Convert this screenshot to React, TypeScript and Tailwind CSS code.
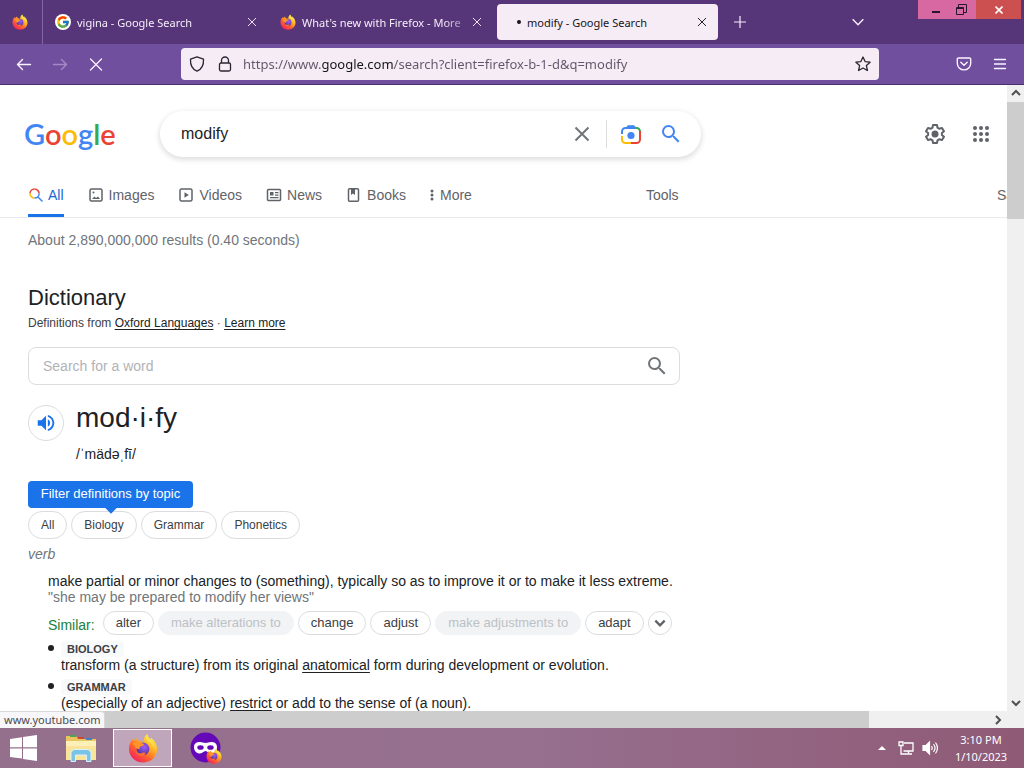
import type { ReactNode } from 'react';
import clsx from 'clsx';
import { FcGoogle } from 'react-icons/fc';

interface IconProps {
    className?: string;
}

function FirefoxIcon({ className, id }: IconProps & { id: string }) {
    return (
        <svg viewBox="0 0 32 32" className={className} aria-hidden="true">
            <defs>
                <linearGradient id={`${id}-body`} x1="0.85" y1="0.1" x2="0.2" y2="0.95">
                    <stop offset="0" stopColor="#fff14f" />
                    <stop offset="0.35" stopColor="#ffae24" />
                    <stop offset="0.65" stopColor="#ff6030" />
                    <stop offset="1" stopColor="#f02060" />
                </linearGradient>
                <radialGradient id={`${id}-core`} cx="0.6" cy="0.35" r="0.7">
                    <stop offset="0" stopColor="#a35cf5" />
                    <stop offset="1" stopColor="#46329c" />
                </radialGradient>
            </defs>
            <path
                d="M20.5 1c.2 3 2 4.500 4 6.400 0-1.200-.1-1.900-.4-2.900 3.600 2.600 6.900 7.300 6.900 13C31 25.300 24.300 31.500 16 31.500S1 25 1 17c0-4.500 1.500-8 4-11 .2 1 .4 1.700 1 2.400C7.300 7 8.600 5.900 10.400 5c-.2 1.500.1 2.600.9 3.500 2 .1 3.900.4 5.300 1.200C16.200 6.600 17.500 3 20.500 1z"
                fill={`url(#${id}-body)`}
            />
            <circle cx="16" cy="17" r="6.800" fill={`url(#${id}-core)`} />
            <path d="M4.500 12c3-2.600 6-3.300 9.500-1.600 1 .5 2 1.200 3.200 1.200-.4 1.900-2.500 2.100-3.700 2.700-1.500.8-1.300 2-.8 2.800-3.700.5-5.400-1.500-5.600-4.200z" fill="#ff9427" />
            <path d="M8 18c1 3 4 4.500 7 3.300 2-.8 3.200-.6 4 .4-2 4.300-9.500 4-11-3.700z" fill="#ff6c31" />
            <path d="M20.500 1c.2 4.500 8 7 7.300 16.500C27.300 12.500 25 11 22 9.500c-2.500-1.600-3.600-5-1.500-8.500z" fill="#ffe14a" />
        </svg>
    );
}

function CloseIcon({ className }: IconProps) {
    return (
        <svg viewBox="0 0 16 16" className={className} fill="none" stroke="currentColor" strokeWidth="1.5" strokeLinecap="round" aria-hidden="true">
            <path d="M2 2l12 12M14 2L2 14" />
        </svg>
    );
}

function ChevronIcon({ className, strokeWidth = 2 }: IconProps & { strokeWidth?: number }) {
    return (
        <svg viewBox="0 0 12 12" className={className} fill="none" stroke="currentColor" strokeWidth={strokeWidth} aria-hidden="true">
            <path d="M2 4l4 4 4-4" />
        </svg>
    );
}

function SearchIcon({ className }: IconProps) {
    return (
        <svg viewBox="0 0 24 24" className={className} fill="currentColor" aria-hidden="true">
            <path d="M15.500 14h-.79l-.28-.27A6.470 6.470 0 0 0 16 9.500 6.500 6.500 0 1 0 9.500 16c1.610 0 3.090-.59 4.230-1.570l.27.28v.79l5 4.990L20.490 19l-4.990-5zm-6 0C7.010 14 5 11.990 5 9.500S7.010 5 9.500 5 14 7.010 14 9.500 11.990 14 9.500 14z" />
        </svg>
    );
}

interface BrowserTabProps {
    title: string;
    icon: ReactNode;
    active?: boolean;
    className: string;
}

function BrowserTab({ title, icon, active, className }: BrowserTabProps) {
    return (
        <div className={clsx('flex h-9 items-center rounded pr-[7px] text-[11px]', className, active ? 'bg-[#f5ecf5] text-[#15141a]' : 'text-[#f6eefa]')}>
            {icon}
            <span
                className={clsx(
                    'flex-1 overflow-hidden pt-0.5 whitespace-nowrap',
                    !active && 'mask-r-from-85% mask-r-to-105%',
                )}
            >
                {title}
            </span>
            <button type="button" aria-label={`Close ${title}`} className="p-1">
                <CloseIcon className="size-2.5" />
            </button>
        </div>
    );
}

function TabStrip() {
    return (
        <div className="flex h-11 shrink-0 items-center bg-[#563579] text-[#f6eefa]">
            <button type="button" aria-label="Firefox View" className="flex h-full w-[43px] shrink-0 items-center justify-center border-r border-[#8564a8] pr-0.5">
                <FirefoxIcon id="view" className="size-4" />
            </button>
            <BrowserTab
                title="vigina - Google Search"
                className="w-[225px] pl-3"
                icon={
                    <span className="mr-1.5 flex size-4 shrink-0 items-center justify-center rounded-full bg-white">
                        <FcGoogle className="size-3.5" />
                    </span>
                }
            />
            <BrowserTab
                title="What's new with Firefox - More"
                className="w-[225px] pl-3"
                icon={<FirefoxIcon id="news" className="mr-1.5 size-4 shrink-0" />}
            />
            <BrowserTab
                active
                title="modify - Google Search"
                className="ml-1 w-[221px] pl-5"
                icon={<span className="mr-1.5 size-1 shrink-0 rounded-full bg-[#15141a]" />}
            />
            <button type="button" aria-label="New tab" className="ml-4">
                <svg viewBox="0 0 12 12" className="size-3" fill="none" stroke="currentColor" strokeWidth="1.2" aria-hidden="true">
                    <path d="M6 0v12M0 6h12" />
                </svg>
            </button>
            <button type="button" aria-label="List all tabs" className="mr-[52px] ml-auto">
                <ChevronIcon className="size-4" strokeWidth={1.1} />
            </button>
            <div className="mr-[3px] flex h-[19px] self-start text-[#2a1530]">
                <button type="button" aria-label="Minimize" className="flex w-9 items-center justify-center bg-[#d868a2] pt-1">
                    <span className="h-0.5 w-2 bg-current" />
                </button>
                <button type="button" aria-label="Restore" className="flex w-[22px] items-center bg-[#d868a2] pl-0.5">
                    <svg viewBox="0 0 11 11" className="size-[11px]" fill="none" stroke="currentColor" aria-hidden="true">
                        <path d="M.5 3.500h7v7h-7zM2.500 3V.5h8v8H8M.5 4.500h7" />
                    </svg>
                </button>
                <button type="button" aria-label="Close" className="flex w-[45px] items-center justify-center bg-[#cd5050] text-white">
                    <svg viewBox="0 0 8 8" className="size-2" stroke="currentColor" strokeWidth="1.6" aria-hidden="true">
                        <path d="M.5.5l7 7M7.500.5l-7 7" />
                    </svg>
                </button>
            </div>
        </div>
    );
}

function Toolbar() {
    return (
        <div className="flex h-[41px] shrink-0 items-center border-b border-[#4c2f70] bg-[#704f9e] pr-4 pl-4 text-[#fbf3ff]">
            <button type="button" aria-label="Go back">
                <svg viewBox="0 0 16 16" className="size-4" fill="none" stroke="currentColor" strokeWidth="1.4" strokeLinecap="round" strokeLinejoin="round" aria-hidden="true">
                    <path d="M14.500 8.500H1.500M6.500 3.500l-5 5 5 5" />
                </svg>
            </button>
            <button type="button" aria-label="Go forward" className="ml-5 text-[#a489c6]" disabled>
                <svg viewBox="0 0 16 16" className="size-4" fill="none" stroke="currentColor" strokeWidth="1.4" strokeLinecap="round" strokeLinejoin="round" aria-hidden="true">
                    <path d="M1.500 8.500h13M9.500 3.500l5 5-5 5" />
                </svg>
            </button>
            <button type="button" aria-label="Stop loading" className="ml-5">
                <svg viewBox="0 0 16 16" className="size-4" stroke="currentColor" strokeWidth="1.3" strokeLinecap="round" aria-hidden="true">
                    <path d="M2.500 3l11 11M13.500 3l-11 11" />
                </svg>
            </button>
            <div className="mr-[77px] ml-[77px] flex h-8 flex-1 items-center rounded bg-[#f5ecf5] px-2 text-[#2b2633]">
                <svg viewBox="0 0 16 16" className="size-4 shrink-0" fill="none" stroke="currentColor" strokeWidth="1.3" strokeLinejoin="round" aria-hidden="true">
                    <path d="M8 .8l6.500 2.400c.3 5-1.500 9.800-6.500 12C3 13 1.200 8.200 1.500 3.200z" />
                </svg>
                <svg viewBox="0 0 16 16" className="ml-3 size-4 shrink-0" fill="none" stroke="currentColor" strokeWidth="1.3" aria-hidden="true">
                    <rect x="2.500" y="7" width="11" height="8" rx="1.500" />
                    <path d="M4.500 7V4.500a3.500 3.500 0 0 1 7 0V7" />
                </svg>
                <input
                    type="text"
                    aria-label="Address"
                    defaultValue="https://www.google.com/search?client=firefox-b-1-d&q=modify"
                    className="ml-2.5 min-w-0 flex-1 bg-[linear-gradient(90deg,#5f5769_78px,#15141a_78px,#15141a_150px,#5f5769_150px)] bg-clip-text pt-0.5 text-[13px] text-transparent outline-none"
                />
                <button type="button" aria-label="Bookmark this page">
                    <svg viewBox="0 0 16 16" className="size-4" fill="none" stroke="currentColor" strokeWidth="1.3" strokeLinejoin="round" aria-hidden="true">
                        <path d="M8 1l2.100 4.600 5 .6-3.700 3.400 1 4.900L8 12l-4.400 2.500 1-4.900L.9 6.200l5-.6z" />
                    </svg>
                </button>
            </div>
            <button type="button" aria-label="Save to Pocket">
                <svg viewBox="0 0 16 16" className="size-4" fill="none" stroke="currentColor" strokeWidth="1.4" strokeLinecap="round" strokeLinejoin="round" aria-hidden="true">
                    <path d="M2.500 2h11c.7 0 1.200.5 1.200 1.200v4a6.700 6.700 0 0 1-13.400 0v-4C1.300 2.500 1.800 2 2.500 2zM4.800 6.200L8 9.300l3.200-3.100" />
                </svg>
            </button>
            <button type="button" aria-label="Open application menu" className="ml-5">
                <svg viewBox="0 0 16 16" className="size-4" stroke="currentColor" strokeWidth="1.3" strokeLinecap="round" aria-hidden="true">
                    <path d="M2.500 3.500h11M2.500 8h11M2.500 12.500h11" />
                </svg>
            </button>
        </div>
    );
}

function LensIcon() {
    return (
        <svg viewBox="0 0 24 24" className="size-6" fill="none" strokeWidth="2" aria-hidden="true">
            <path d="M3 12V9.500A3.500 3.500 0 0 1 6.500 6H8" stroke="#4285f4" />
            <path d="M7 6l1.800-2.200h6.400L17 6z" fill="#4285f4" stroke="#4285f4" strokeWidth="1" />
            <path d="M7 6h10" stroke="#4285f4" />
            <path d="M17 6h.5A3.500 3.500 0 0 1 21 9.500" stroke="#34a853" />
            <path d="M21 9v8.500a3.500 3.500 0 0 1-3.500 3.500H12" stroke="#ea4335" />
            <path d="M3 14v3.500A3.500 3.500 0 0 0 6.500 21H12" stroke="#fbbc04" />
            <circle cx="12" cy="13.500" r="3.600" fill="#4285f4" />
        </svg>
    );
}

function SearchHeader() {
    return (
        <header className="flex items-center pt-[26px] pr-3.5">
            <a href="#home" aria-label="Google" className="ml-6 w-[136px] shrink-0 font-['Lato'] text-[29px] leading-9 font-semibold">
                <span className="text-[#4285f4]">G</span>
                <span className="text-[#ea4335]">o</span>
                <span className="text-[#fbbc05]">o</span>
                <span className="text-[#4285f4]">g</span>
                <span className="text-[#34a853]">l</span>
                <span className="text-[#ea4335]">e</span>
            </a>
            <form className="flex h-[46px] w-[541px] items-center rounded-full bg-white pr-[18px] pl-[21px] shadow-[0_2px_5px_1px_rgba(64,60,67,0.16)]">
                <input type="text" aria-label="Search" defaultValue="modify" className="min-w-0 flex-1 text-base text-[#202124] outline-none" />
                <button type="button" aria-label="Clear">
                    <svg viewBox="0 0 16 16" className="size-4" stroke="#70757a" strokeWidth="2" aria-hidden="true">
                        <path d="M1.500 1.500l13 13M14.500 1.500l-13 13" />
                    </svg>
                </button>
                <span className="mx-4 h-7 w-px bg-[#dadce0]" />
                <button type="button" aria-label="Search by image" className="-ml-1">
                    <LensIcon />
                </button>
                <button type="button" aria-label="Google Search" className="ml-4 text-[#4285f4]">
                    <SearchIcon className="size-6" />
                </button>
            </form>
            <button type="button" aria-label="Settings" className="ml-auto text-[#5f6368]">
                <svg viewBox="0 0 24 24" className="size-6" fill="none" stroke="currentColor" strokeWidth="2" strokeLinejoin="round" aria-hidden="true">
                    <path d="M10 3h4l.5 2.700 1.900 1.100L19 5.900l2 3.400-2.100 1.800v1.800l2.100 1.800-2 3.400-2.600-.9-1.900 1.100L14 21h-4l-.5-2.700-1.900-1.100-2.600.9-2-3.400 2.100-1.800v-1.800L3 9.300l2-3.400 2.600.9 1.900-1.100z" />
                    <circle cx="12" cy="12" r="3.500" fill="currentColor" stroke="none" />
                </svg>
            </button>
            <button type="button" aria-label="Google apps" className="ml-[22px] text-[#5f6368]">
                <svg viewBox="0 0 24 24" className="size-6" fill="currentColor" aria-hidden="true">
                    {[6, 12, 18].map((cy) => [6, 12, 18].map((cx) => <circle key={`${cx}-${cy}`} cx={cx} cy={cy} r="2" />))}
                </svg>
            </button>
        </header>
    );
}

const frame = <rect x="2" y="2" width="12" height="12" rx="1.500" fill="none" stroke="currentColor" strokeWidth="1.500" />;

const navItems = [
    {
        label: 'All',
        icon: (
            <g fill="none" strokeWidth="1.500">
                <path d="M2 6.500A4.600 4.600 0 0 1 6.500 2" stroke="#ea4335" />
                <path d="M6.500 2a4.600 4.600 0 0 1 4.600 4.600" stroke="#ea4335" />
                <path d="M2 6.500a4.600 4.600 0 0 0 4.600 4.600" stroke="#fbbc04" />
                <path d="M6.600 11.100a4.500 4.500 0 0 0 4.500-4.500" stroke="#4285f4" />
                <path d="M10 10l4.500 4.500" stroke="#4285f4" />
            </g>
        ),
    },
    { label: 'Images', icon: <>{frame}<path d="M4 12l2.500-2.500L8 11l2-1.500 2 2.500z" /><circle cx="5.500" cy="5.500" r="1" /></> },
    { label: 'Videos', icon: <>{frame}<path d="M6.500 5.300v5.400L10.800 8z" /></> },
    {
        label: 'News',
        icon: (
            <>
                <rect x="1.500" y="2.500" width="13" height="11" rx="1" fill="none" stroke="currentColor" strokeWidth="1.500" />
                <path d="M4 5h3.500v3.500H4zM9 5h3.500v1.300H9zM9 7.500h3.500v1.300H9zM4 10h8.500v1.300H4z" />
            </>
        ),
    },
    {
        label: 'Books',
        icon: (
            <>
                <rect x="2.500" y="1.800" width="10" height="12.500" rx="1" fill="none" stroke="currentColor" strokeWidth="1.500" />
                <path d="M5 2h4v6L7 6.500 5 8z" />
            </>
        ),
    },
];

function SearchNav() {
    return (
        <nav className="flex h-[61px] items-end overflow-hidden border-b border-[#e8eaed] pl-7 text-sm text-[#5f6368]">
            {navItems.map(({ label, icon }, index) => (
                <a
                    key={label}
                    href={`#${label.toLowerCase()}`}
                    className={clsx(
                        'mr-6 flex h-[41px] shrink-0 items-center border-b-3',
                        index === 0 ? 'gap-1 border-[#1a73e8] text-[#1967d2]' : 'gap-[5px] border-transparent',
                    )}
                >
                    <svg viewBox="0 0 16 16" className="size-4" fill="currentColor" aria-hidden="true">
                        {icon}
                    </svg>
                    {label}
                </a>
            ))}
            <button type="button" className="flex h-[41px] items-center gap-1.5 border-b-3 border-transparent">
                <svg viewBox="0 0 4 12" className="h-3 w-1" fill="currentColor" aria-hidden="true">
                    <circle cx="2" cy="2" r="1.500" />
                    <circle cx="2" cy="6" r="1.500" />
                    <circle cx="2" cy="10" r="1.500" />
                </svg>
                More
            </button>
            <button type="button" className="ml-[174px] h-[41px] border-b-3 border-transparent">Tools</button>
            <div className="ml-auto flex h-[41px] w-2.5 items-center overflow-hidden border-b-3 border-transparent">
                <a href="#safe">SafeSearch</a>
            </div>
        </nav>
    );
}

function Chip({ label, muted, className }: { label: string; muted?: boolean; className: string }) {
    return (
        <button
            type="button"
            className={clsx(
                'rounded-full border px-3 whitespace-nowrap',
                className,
                muted ? 'border-[#f1f3f4] bg-[#f1f3f4] text-[#bdc1c6]' : 'border-[#dadce0] text-[#3c4043]',
            )}
        >
            {label}
        </button>
    );
}

const topics = ['All', 'Biology', 'Grammar', 'Phonetics'];

const synonyms = [
    { label: 'alter' },
    { label: 'make alterations to', muted: true },
    { label: 'change' },
    { label: 'adjust' },
    { label: 'make adjustments to', muted: true },
    { label: 'adapt' },
];

function Sense({ topic, children }: { topic: string; children: ReactNode }) {
    return (
        <li className="relative mb-1.5 pl-[13px] before:absolute before:top-1 before:left-0 before:size-1.5 before:rounded-full before:bg-[#202124]">
            <div className="flex h-4 items-center">
                <span className="rounded bg-[#f8f9fa] px-1.5 text-[11px] leading-4 font-bold text-[#3c4043]">{topic}</span>
            </div>
            <p>{children}</p>
        </li>
    );
}

function Dictionary() {
    return (
        <section className="ml-7 w-[652px] text-sm text-[#202124]">
            <h2 className="mt-[22px] text-[22px] leading-7">Dictionary</h2>
            <p className="mt-[3px] text-xs text-[#3c4043]">
                Definitions from <a href="#oxford" className="text-[#202124] underline underline-offset-2">Oxford Languages</a> · <a href="#learn" className="text-[#202124] underline underline-offset-2">Learn more</a>
            </p>
            <form className="mt-4 flex h-[38px] items-center rounded-lg border border-[#dadce0] pr-2.5 pl-3.5">
                <input type="text" aria-label="Search for a word" placeholder="Search for a word" className="min-w-0 flex-1 outline-none placeholder:text-[#b0b3b7]" />
                <button type="button" aria-label="Look up" className="text-[#70757a]">
                    <SearchIcon className="size-6" />
                </button>
            </form>
            <div className="mt-[15px] flex gap-3">
                <button type="button" aria-label="Listen" className="mt-[5px] flex size-9 items-center justify-center rounded-full border border-[#dadce0] text-[#1a73e8]">
                    <svg viewBox="0 0 24 24" className="size-[22px]" fill="currentColor" aria-hidden="true">
                        <path d="M3 9v6h4l5 5V4L7 9H3zm13.500 3A4.500 4.500 0 0 0 14 7.970v8.050c1.480-.73 2.500-2.250 2.500-4.020zM14 3.230v2.060c2.890.86 5 3.540 5 6.710s-2.110 5.850-5 6.710v2.060c4.010-.91 7-4.490 7-8.770s-2.990-7.860-7-8.770z" />
                    </svg>
                </button>
                <div>
                    <h3 className="text-[28px] leading-9">mod·i·fy</h3>
                    <p className="mt-2">/ˈmädəˌfī/</p>
                </div>
            </div>
            <div className="relative mt-[17px] flex h-[27px] w-[165px] items-center justify-center rounded-sm bg-[#1a73e8] text-[13px] text-white">
                Filter definitions by topic
                <span className="absolute top-[23px] left-[79px] z-10 size-2 rotate-45 bg-[#1a73e8]" />
            </div>
            <div className="mt-[3px] flex gap-1">
                {topics.map((topic) => (
                    <Chip key={topic} label={topic} className="h-7 text-xs" />
                ))}
            </div>
            <p className="mt-[5px] text-[#70757a] italic">verb</p>
            <div className="mt-[9px] pl-5 leading-4">
                <p className="whitespace-nowrap">make partial or minor changes to (something), typically so as to improve it or to make it less extreme.</p>
                <p className="text-[#70757a]">"she may be prepared to modify her views"</p>
                <div className="mt-1.5 flex items-center gap-1">
                    <span className="mr-1 pt-1 text-[#188038]">Similar:</span>
                    {synonyms.map(({ label, muted }) => (
                        <Chip key={label} label={label} muted={muted} className="h-6 text-[13px]" />
                    ))}
                    <button type="button" aria-label="More synonyms" className="flex size-6 items-center justify-center rounded-full border border-[#dadce0] text-[#5f6368]">
                        <ChevronIcon className="size-3.5" />
                    </button>
                </div>
                <ul className="mt-1.5">
                    <Sense topic="BIOLOGY">
                        transform (a structure) from its original <a href="#anatomical" className="underline underline-offset-2">anatomical</a> form during development or evolution.
                    </Sense>
                    <Sense topic="GRAMMAR">
                        (especially of an adjective) <a href="#restrict" className="underline underline-offset-2">restrict</a> or add to the sense of (a noun).
                    </Sense>
                </ul>
            </div>
        </section>
    );
}

function Taskbar() {
    return (
        <footer className="flex h-10 shrink-0 items-center bg-linear-to-r from-[#94708c] via-[#977090] to-[#8f5a76] text-[11px] text-white">
            <button type="button" aria-label="Start" className="ml-2.5">
                <svg viewBox="0 0 28 26" className="h-[26px] w-7" fill="#fff" aria-hidden="true">
                    <path d="M0 4l12-1.800V12.300H0zM13 2l14-2v12.300H13zM0 13.500h12v10L0 22zM13 13.500h14V26l-14-2z" />
                </svg>
            </button>
            <button type="button" aria-label="File Explorer" className="ml-[27px]">
                <svg viewBox="0 0 32 30" className="h-[30px] w-8" aria-hidden="true">
                    <path d="M1 3h10l2 3h18v21H1z" fill="#e9c55f" />
                    <path d="M5 2h6v2H5z" fill="#4aa64f" />
                    <path d="M13 4h6v2h-6z" fill="#c74b35" />
                    <path d="M21 5h6v2h-6z" fill="#3f81c4" />
                    <path d="M1 8h30v19H1z" fill="#f8e59b" />
                    <path d="M1 8h30v5H1z" fill="#fcf0b8" />
                    <path d="M6 28.500V19l3-2.500h14l3 2.500v9.500h-4.500V22h-11v6.500z" fill="#79c4e6" stroke="#d9f2fc" />
                </svg>
            </button>
            <button type="button" aria-label="Firefox" className="ml-4 flex h-[38px] w-[59px] items-center justify-center border border-white bg-[#bfa6bb]">
                <FirefoxIcon id="taskbar" className="size-[30px]" />
            </button>
            <button type="button" aria-label="Firefox Private Browsing" className="relative ml-[18px]">
                <svg viewBox="0 0 32 32" className="size-8" aria-hidden="true">
                    <circle cx="15.500" cy="15.500" r="15" fill="#6408b8" />
                    <path d="M4 15c0-4 3-5 6-5 2 0 3.500 1 5.500 1s3.500-1 5.500-1c3 0 6 1 6 5s-2.500 6.500-6 6.500c-2.500 0-3.500-2.500-5.500-2.500s-3 2.500-5.500 2.500C6.500 21.500 4 19 4 15z" fill="#fff" />
                    <ellipse cx="10.500" cy="15.500" rx="3.200" ry="2.300" fill="#6408b8" />
                    <ellipse cx="20.500" cy="15.500" rx="3.200" ry="2.300" fill="#6408b8" />
                </svg>
                <FirefoxIcon id="private" className="absolute right-0 bottom-0 size-4" />
            </button>
            <div className="mr-3.5 ml-auto flex items-center">
                <svg viewBox="0 0 8 4" className="h-1 w-2" fill="#fff" aria-hidden="true">
                    <path d="M0 4l4-4 4 4z" />
                </svg>
                <svg viewBox="0 0 16 16" className="ml-3 size-4" fill="none" stroke="#fff" strokeWidth="1.300" aria-hidden="true">
                    <path d="M6 3h9v8H5.500M7 14h7M10.500 11v3M3 6v8h4M1 2h4v3.500H1z" />
                </svg>
                <svg viewBox="0 0 16 16" className="ml-2 size-4" fill="none" stroke="#fff" strokeWidth="1.200" aria-hidden="true">
                    <path d="M1 5.500h3L7.500 2v12L4 10.500H1z" fill="#fff" />
                    <path d="M9.500 6c1 1.300 1 2.700 0 4M11.500 4c2 2.600 2 5.400 0 8M13.500 2.500c2.500 3.500 2.500 7.500 0 11" />
                </svg>
                <time className="ml-3.5 w-[58px] text-center leading-[17px]">
                    3:10 PM
                    <br />
                    1/10/2023
                </time>
            </div>
        </footer>
    );
}

export default function App() {
    return (
        <div className="flex h-screen flex-col overflow-hidden font-['Noto_Sans',sans-serif]">
            <TabStrip />
            <Toolbar />
            <div className="relative flex min-h-0 flex-1 flex-col bg-[#f0f0f0]">
                <div className="flex min-h-0 flex-1">
                    <main className="min-w-0 flex-1 overflow-hidden bg-white font-['Liberation_Sans',Arial,sans-serif]">
                        <SearchHeader />
                        <SearchNav />
                        <p className="flex h-11 items-center pl-7 text-sm text-[#70757a]">About 2,890,000,000 results (0.40 seconds)</p>
                        <Dictionary />
                    </main>
                    <div className="flex w-[17px] flex-col items-center text-[#505050]">
                        <ChevronIcon className="my-0.5 size-3 rotate-180" />
                        <div className="mt-px h-[117px] w-full bg-[#cdcdcd]" />
                        <ChevronIcon className="mt-auto mb-0.5 size-3" />
                    </div>
                </div>
                <div className="flex h-[17px] shrink-0 items-center pl-[17px] text-[#505050]">
                    <div className="h-full w-[852px] bg-[#cdcdcd]" />
                    <ChevronIcon className="mr-5 ml-auto size-3 -rotate-90" />
                </div>
                <div className="absolute bottom-0 left-0 flex h-[17px] items-center rounded-tr-sm border-t border-r border-[#d8d8d8] bg-[#f7f7f9] px-1 text-[11px] text-[#4a4a4f]">
                    www.youtube.com
                </div>
            </div>
            <Taskbar />
        </div>
    );
}
